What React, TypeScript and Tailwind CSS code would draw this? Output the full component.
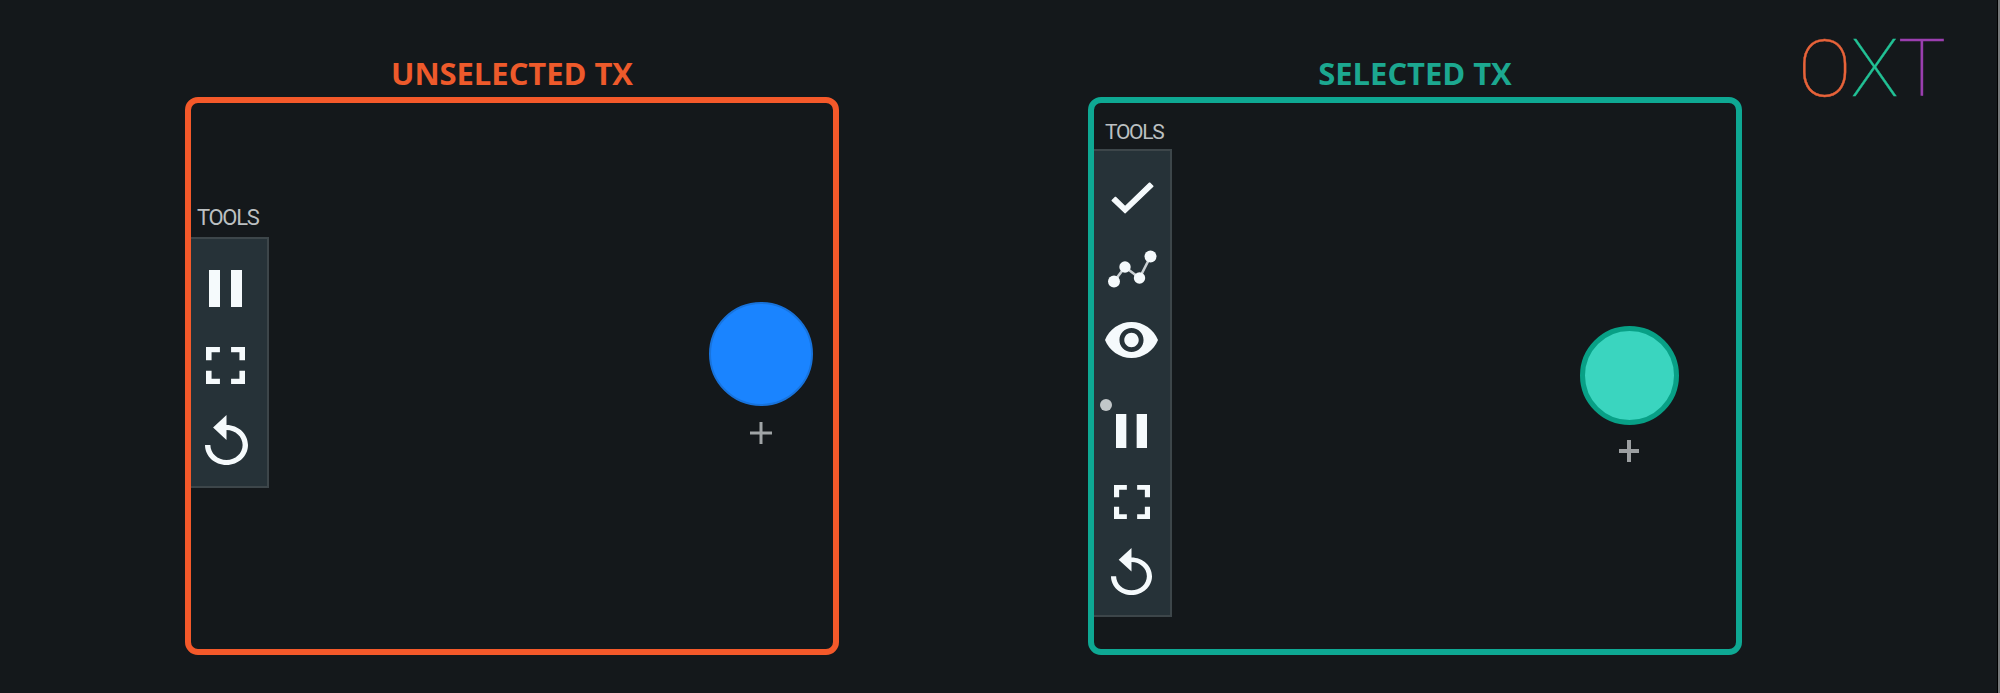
import type { ReactNode } from "react";

type IconProps = { box: string; className: string; children: ReactNode };

function Icon({ box, className, children }: IconProps) {
  return (
    <svg viewBox={box} preserveAspectRatio="none" fill="currentColor" className={`block shrink-0 ${className}`}>
      {children}
    </svg>
  );
}

function Pause({ className }: { className: string }) {
  return (
    <Icon box="6 5 12 14" className={className}>
      <path d="M6 19h4V5H6v14zm8-14v14h4V5h-4z" />
    </Icon>
  );
}

function Fullscreen({ className }: { className: string }) {
  return (
    <Icon box="5 5 14 14" className={className}>
      <path d="M7 14H5v5h5v-2H7v-3zm-2-4h2V7h3V5H5v5zm12 7h-3v2h5v-5h-2v3zM14 5v2h3v3h2V5h-5z" />
    </Icon>
  );
}

function Replay({ className }: { className: string }) {
  return (
    <Icon box="4 1 16 20" className={className}>
      <path d="M12 5V1L7 6l5 5V7c3.31 0 6 2.69 6 6s-2.69 6-6 6-6-2.69-6-6H4c0 4.42 3.58 8 8 8s8-3.58 8-8-3.58-8-8-8z" />
    </Icon>
  );
}

function Check({ className }: { className: string }) {
  return (
    <Icon box="2.9 5.1 18.6 14.4" className={className}>
      <path
        d="M9 16.17L4.83 12l-1.42 1.41L9 19 21 7l-1.41-1.41z"
        stroke="currentColor"
        strokeWidth="0.6"
        strokeLinejoin="round"
      />
    </Icon>
  );
}

function Eye({ className }: { className: string }) {
  return (
    <Icon box="1 4.5 22 15" className={className}>
      <path d="M12 4.5C7 4.5 2.73 7.61 1 12c1.73 4.39 6 7.5 11 7.5s9.27-3.11 11-7.5c-1.73-4.39-6-7.5-11-7.5zM12 17c-2.76 0-5-2.24-5-5s2.24-5 5-5 5 2.24 5 5-2.24 5-5 5zm0-8c-1.66 0-3 1.34-3 3s1.34 3 3 3 3-1.34 3-3-1.34-3-3-3z" />
    </Icon>
  );
}

function Timeline({ className }: { className: string }) {
  return (
    <Icon box="0 0 50 38" className={className}>
      <path d="M7 31.5L18 17L32.5 28L43.5 6.5" fill="none" stroke="#c9cfd2" strokeWidth="2.6" />
      <circle cx="7" cy="31.5" r="6" />
      <circle cx="18" cy="17" r="5.7" />
      <circle cx="32.5" cy="28" r="5.7" />
      <circle cx="43.5" cy="6.5" r="6" />
    </Icon>
  );
}

export default function App() {
  return (
    <div className="relative flex h-[693px] w-[2000px] overflow-hidden bg-[#14181b] pl-[185px] font-['Open_Sans',sans-serif]">
      <section className="mr-[249px] flex w-[654px] flex-col pt-[53px]">
        <h2 className="h-[44px] text-center text-[31px] leading-[40px] font-bold tracking-[-0.05px] text-[#ee5a2b]">
          <span>UNSELECTED TX</span>
        </h2>
        <div className="relative h-[558px] rounded-[13px] border-[6px] border-[#f4592a] pt-[100px]">
          <div className="h-[34px] pl-[6px] font-[Roboto,sans-serif] text-[22px] leading-[30px] tracking-[-1.3px] text-[#bcc0c2]">
            TOOLS
          </div>
          <div className="flex h-[251px] w-[78px] flex-col border-y-2 border-r-2 border-[#3d464a] bg-[#263238] pt-[31px] text-[#f5fafc]">
            <Pause className="ml-[18px] h-[37px] w-[33px]" />
            <Fullscreen className="mt-[40px] ml-[15px] h-[37px] w-[39px]" />
            <Replay className="mt-[31px] ml-[14px] h-[50px] w-[43px]" />
          </div>
          <div className="absolute top-[199px] left-[518px] size-[104px] rounded-full border-2 border-[#1873dc] bg-[#1a84ff]" />
          <Icon box="0 0 22 22" className="absolute top-[319px] left-[559px] size-[22px] text-[#a0a4a6]">
            <path d="M9.5 0h3v9.5H22v3h-9.5V22h-3v-9.5H0v-3h9.5z" />
          </Icon>
        </div>
      </section>

      <section className="flex w-[654px] flex-col pt-[53px]">
        <h2 className="h-[44px] text-center text-[31px] leading-[40px] font-bold tracking-[-0.05px] text-[#1ca890]">
          <span>SELECTED TX</span>
        </h2>
        <div className="relative h-[558px] rounded-[13px] border-[6px] border-[#0ea893] pt-[14px]">
          <div className="h-[32px] pl-[11px] font-[Roboto,sans-serif] text-[21px] leading-[30px] tracking-[-1.3px] text-[#bcc0c2]">
            TOOLS
          </div>
          <div className="flex h-[468px] w-[78px] flex-col border-y-2 border-r-2 border-[#3d464a] bg-[#263238] pt-[31px] text-[#f5fafc]">
            <Check className="ml-[17px] h-[32px] w-[43px]" />
            <Timeline className="mt-[36px] ml-[13px] h-[38px] w-[50px]" />
            <Eye className="mt-[34px] ml-[11px] h-[36px] w-[53px]" />
            <Pause className="mt-[56px] ml-[22px] h-[34px] w-[31px]" />
            <Fullscreen className="mt-[37px] ml-[20px] h-[34px] w-[36px]" />
            <Replay className="mt-[29px] ml-[17px] h-[47px] w-[41px]" />
          </div>
          <div className="absolute top-[296px] left-[6px] size-[12px] rounded-full bg-[#c2c7c9]" />
          <div className="absolute top-[223px] left-[486px] size-[99px] rounded-full border-[5px] border-[#08a086] bg-[#3ad5bf]" />
          <Icon box="0 0 20 22" className="absolute top-[337px] left-[525px] h-[22px] w-[20px] text-[#9c9fa1]">
            <path d="M8 0h4v9H20v4h-8V22h-4v-9H0v-4h8z" />
          </Icon>
        </div>
      </section>

      <div className="ml-[56px] flex pt-[21px] font-[Roboto,sans-serif] text-[80px] leading-[96px] font-thin tracking-[-0.5px] [-webkit-text-stroke:0.4px]">
        <span className="text-[#e8633a]">O</span>
        <span className="text-[#22c296]">X</span>
        <span className="text-[#9b3fb0]">T</span>
      </div>
      <div className="ml-auto w-[3px] shrink-0 border-r-2 border-l border-r-[#77797a] border-l-black" />
    </div>
  );
}
